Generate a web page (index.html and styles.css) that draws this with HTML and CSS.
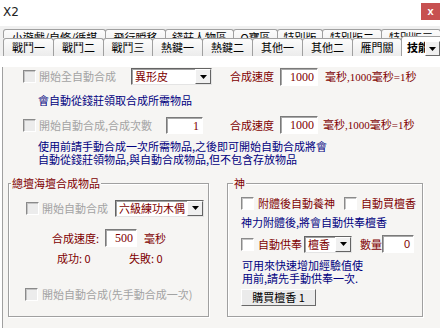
FILE: index.html
```html
<!DOCTYPE html>
<html lang="zh-Hant">
<head>
  <meta charset="UTF-8">
  <meta name="viewport" content="width=device-width, initial-scale=1.0">
  <title>X2</title>
  <link rel="stylesheet" href="styles.css">
</head>
<body>
  <div class="titleBar">
    <span class="title">X2</span>
    <span class="closeBtn">x</span>
  </div>

  <div class="tabStrip">
    <div class="tabRow backRow">
      <div class="tab t1">小遊戲/自修/循謀</div>
      <div class="tab t2">飛行瞬移</div>
      <div class="tab t3">錢莊人物區</div>
      <div class="tab t4">O寶區</div>
      <div class="tab t5">特別版</div>
      <div class="tab t6">特別版二</div>
      <div class="tab t6">特別版三</div>
    </div>
    <div class="tabRow frontRow">
      <div class="tab">戰鬥一</div>
      <div class="tab">戰鬥二</div>
      <div class="tab narrow">戰鬥三</div>
      <div class="tab">熱鍵一</div>
      <div class="tab">熱鍵二</div>
      <div class="tab">其他一</div>
      <div class="tab">其他二</div>
      <div class="tab narrow">雁門關</div>
      <div class="tab active">技能</div>
    </div>
    <span class="scrollBtn"><svg width="7" height="4" viewBox="0 0 7 4"><path d="M0 0h7L3.5 4z" fill="#000"/></svg></span>
  </div>

  <div class="panel">
    <div class="row rowA">
      <div class="checkCell wA">
        <span class="check off"></span><span class="grayText">開始全自動合成</span>
      </div>
      <div class="combo wCombo1">
        <span class="comboText">異形皮</span>
        <span class="comboBtn"><svg width="7" height="4" viewBox="0 0 7 4"><path d="M0 0h7L3.5 4z" fill="#000"/></svg></span>
      </div>
      <span class="redText speedA">合成速度</span>
      <span class="num wNum38">1000</span>
      <span class="redText unitA">毫秒<span class="serif">,1000</span>毫秒<span class="serif">=1</span>秒</span>
    </div>

    <div class="note noteB">會自動從錢莊領取合成所需物品</div>

    <div class="row rowC">
      <div class="checkCell wC">
        <span class="check off"></span><span class="grayText">開始自動合成,合成次數</span>
      </div>
      <span class="num wNum37">1</span>
      <span class="redText speedC">合成速度</span>
      <span class="num wNum38">1000</span>
      <span class="redText unitC">毫秒<span class="serif">,1000</span>毫秒<span class="serif">=1</span>秒</span>
    </div>

    <div class="note noteD">使用前請手動合成一次所需物品,之後即可開始自動合成將會<br>自動從錢莊領物品,與自動合成物品,但不包含存放物品</div>

    <div class="groups">
      <div class="group groupLeft">
        <div class="groupTitle">總壇海壇合成物品</div>
        <div class="row g1r1">
          <div class="checkCell wG1">
            <span class="check off"></span><span class="grayText">開始自動合成</span>
          </div>
          <div class="combo wCombo2">
            <span class="comboText">六級練功木偶</span>
            <span class="comboBtn"><svg width="7" height="4" viewBox="0 0 7 4"><path d="M0 0h7L3.5 4z" fill="#000"/></svg></span>
          </div>
        </div>
        <div class="row g1r2">
          <span class="redText speedLbl">合成速度:</span>
          <span class="num wNum32">500</span>
          <span class="redText unitMs">毫秒</span>
        </div>
        <div class="row g1r3">
          <span class="redText stat">成功: 0</span>
          <span class="redText">失敗: 0</span>
        </div>
        <div class="row g1r4">
          <span class="check off"></span><span class="grayText">開始自動合成(先手動合成一次)</span>
        </div>
      </div>

      <div class="group groupRight">
        <div class="groupTitle godTitle">神</div>
        <div class="row g2r1">
          <div class="checkCell wG2">
            <span class="check"></span><span class="redText">附體後自動養神</span>
          </div>
          <span class="check"></span><span class="redText">自動買檀香</span>
        </div>
        <div class="note g2r2">神力附體後,將會自動供奉檀香</div>
        <div class="row g2r3">
          <span class="check"></span><span class="redText offerLbl">自動供奉</span>
          <div class="combo wCombo3">
            <span class="comboText">檀香</span>
            <span class="comboBtn"><svg width="7" height="4" viewBox="0 0 7 4"><path d="M0 0h7L3.5 4z" fill="#000"/></svg></span>
          </div>
          <span class="redText qtyLbl">數量</span>
          <span class="num wNum32 sans">0</span>
        </div>
        <div class="note g2r4">可用來快速增加經驗值使<br>用前,請先手動供奉一次.</div>
        <div class="buyBtn">購買檀香 1</div>
      </div>
    </div>
  </div>
</body>
</html>
```

FILE: styles.css
```css
* {
  box-sizing: border-box;
}
body {
  margin: 0;
  width: 440px;
  height: 328px;
  overflow: hidden;
  background: #fff;
  font-family: "Noto Sans CJK TC", "Noto Sans CJK SC", sans-serif;
  font-size: 11px;
  line-height: 13px;
  color: #000;
}

/* title bar */
.titleBar {
  height: 26px;
  display: flex;
  justify-content: space-between;
  align-items: flex-start;
}
.title {
  font-family: "DejaVu Sans", sans-serif;
  font-size: 12px;
  padding: 6px 0 0 3px;
  color: #222;
}
.closeBtn {
  width: 19px;
  height: 17px;
  margin-top: 3px;
  background: #c75050;
  color: #fff;
  font: bold 11px/16px "Liberation Sans", sans-serif;
  text-align: center;
}

/* tabs */
.tabStrip {
  position: relative;
  height: 30px;
  padding-top: 3px;
  background: #f0f0f0;
}
.tabRow {
  display: flex;
  padding-left: 3px;
}
.backRow {
  height: 9px;
  overflow: hidden;
}
.frontRow {
  height: 18px;
}
.tab {
  flex: none;
  height: 18px;
  margin-left: -1px;
  border: 1px solid #a0a0a0;
  border-bottom: none;
  border-radius: 3px 3px 0 0;
  background: linear-gradient(#fcfcfc, #ececec);
  text-align: center;
  white-space: nowrap;
}
.tab:first-child {
  margin-left: 0;
}
.backRow .tab {
  padding-top: 1px;
}
.t1 { width: 103px; }
.t2 { width: 61px; }
.t3 { width: 69px; }
.t4 { width: 45px; }
.t5 { width: 46px; }
.t6 { width: 60px; }
.frontRow .tab {
  width: 51px;
  padding-top: 2px;
}
.frontRow .narrow {
  width: 50px;
}
.frontRow .active {
  width: 44px;
  height: 20px;
  margin-top: -2px;
  padding: 4px 0 0 5px;
  text-align: left;
  background: #fff;
  font-weight: bold;
}
.scrollBtn {
  position: absolute;
  right: 0;
  top: 15px;
  width: 15px;
  height: 15px;
  display: flex;
  align-items: center;
  justify-content: center;
  background: #f0f0f0;
  border: 1px solid;
  border-color: #fff #696969 #696969 #fff;
}

/* panel */
.panel {
  height: 272px;
  margin-left: 2px;
  background: #f6f5f3;
  border-left: 1px solid #a0a0a0;
}
.row {
  display: flex;
  align-items: center;
  white-space: nowrap;
}
.checkCell {
  display: flex;
  align-items: center;
  flex: none;
}
.check {
  flex: none;
  width: 13px;
  height: 13px;
  margin-right: 3px;
  background: #fff;
  border: 1px solid;
  border-color: #8a8a8a #fff #fff #8a8a8a;
  box-shadow: inset 1px 1px #c4c4c4;
}
.check.off {
  background: #ececec;
}
.grayText {
  color: #a3a3a3;
}
.redText {
  color: #800000;
}
.note {
  color: #000080;
  white-space: nowrap;
}
.serif {
  font-family: "Liberation Serif", serif;
}
.num {
  flex: none;
  height: 18px;
  padding-right: 3px;
  text-align: right;
  background: #fff;
  color: #800000;
  font-family: "Liberation Serif", serif;
  font-size: 12px;
  line-height: 16px;
  border: 1px solid;
  border-color: #7a7a7a #fff #fff #7a7a7a;
  box-shadow: inset 1px 1px #a8a8a8;
}
.num.sans {
  font-family: "Liberation Sans", sans-serif;
  font-size: 11px;
}
.combo {
  flex: none;
  display: flex;
  align-items: center;
  justify-content: space-between;
  height: 17px;
  background: #fff;
  border: 1px solid;
  border-color: #646464 #e4e4e4 #e4e4e4 #646464;
  box-shadow: inset 1px 1px #a0a0a0;
  overflow: hidden;
}
.comboText {
  padding-left: 3px;
  color: #800000;
  white-space: nowrap;
}
.comboBtn {
  flex: none;
  width: 16px;
  height: 15px;
  display: flex;
  align-items: center;
  justify-content: center;
  background: #f0f0f0;
  border: 1px solid;
  border-color: #fff #646464 #646464 #fff;
}

/* top rows */
.rowA {
  height: 19px;
  margin: 11px 0 0 20px;
}
.wA { width: 108px; }
.wC { width: 143px; }
.wCombo1 { width: 81px; }
.wNum38 { width: 38px; }
.wNum37 { width: 37px; height: 17px; }
.wNum32 { width: 32px; }
.speedA { margin-left: 18px; width: 50px; }
.unitA { margin-left: 7px; }
.noteB {
  margin: 8px 0 0 35px;
}
.rowC {
  height: 18px;
  margin: 9px 0 0 20px;
}
.speedC { margin-left: 27px; width: 50px; }
.unitC { margin-left: 5px; }
.noteD {
  margin: 6px 0 0 35px;
}

/* group boxes */
.groups {
  display: flex;
  margin: 17px 0 0 5px;
}
.group {
  height: 134px;
  border: 1px solid #a0a0a0;
  box-shadow: 1px 1px #fff, inset 1px 1px #fff;
}
.groupLeft { width: 201px; }
.groupRight { width: 196px; margin-left: 18px; }
.groupTitle {
  width: fit-content;
  margin: -7px 0 0 2px;
  padding: 0 1px;
  background: #f6f5f3;
  color: #800000;
}
.godTitle {
  margin-left: 5px;
}
.g1r1 {
  height: 18px;
  margin: 9px 0 0 17px;
}
.wG1 { width: 89px; }
.wCombo2 { width: 89px; }
.g1r2 {
  height: 18px;
  margin: 12px 0 0 43px;
}
.speedLbl { width: 53px; }
.unitMs { margin-left: 7px; }
.g1r3 {
  margin: 5px 0 0 48px;
}
.stat { width: 72px; }
.g1r4 {
  margin: 23px 0 0 16px;
}
.g1r4 .check { margin-right: 4px; }
.g2r1 {
  height: 13px;
  margin: 7px 0 0 13px;
}
.g2r1 .check, .g2r3 .check { margin-right: 4px; }
.wG2 { width: 103px; }
.g2r2 {
  margin: 6px 0 0 13px;
}
.g2r3 {
  height: 18px;
  margin: 6px 0 0 13px;
}
.offerLbl { width: 46px; }
.wCombo3 { width: 48px; }
.qtyLbl { margin-left: 8px; width: 22px; }
.g2r4 {
  margin: 6px 0 0 14px;
}
.buyBtn {
  width: 75px;
  height: 17px;
  margin: 4px 0 0 13px;
  text-align: center;
  line-height: 15px;
  background: #ebebeb;
  border: 1px solid;
  border-color: #fff #696969 #696969 #fff;
}
```
